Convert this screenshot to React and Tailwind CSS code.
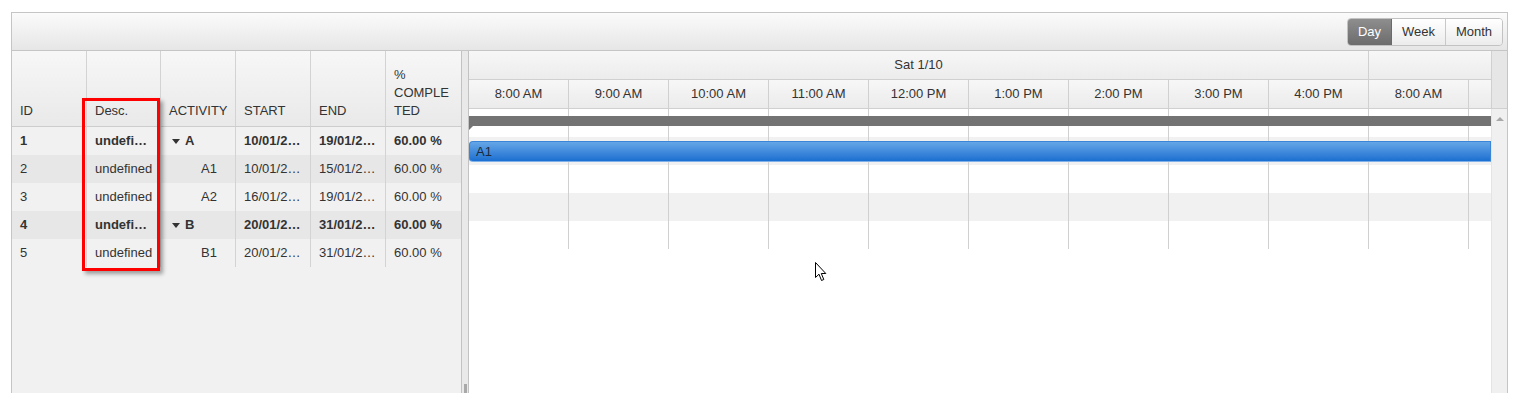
import React from 'react'

const rows = [
  { id: 1, desc: 'undefined', act: 'A', parent: true, start: '10/01/2015', end: '19/01/2015' },
  { id: 2, desc: 'undefined', act: 'A1', start: '10/01/2015', end: '15/01/2015' },
  { id: 3, desc: 'undefined', act: 'A2', start: '16/01/2015', end: '19/01/2015' },
  { id: 4, desc: 'undefined', act: 'B', parent: true, start: '20/01/2015', end: '31/01/2015' },
  { id: 5, desc: 'undefined', act: 'B1', start: '20/01/2015', end: '31/01/2015' },
]

const hours = ['8:00 AM', '9:00 AM', '10:00 AM', '11:00 AM', '12:00 PM', '1:00 PM', '2:00 PM', '3:00 PM', '4:00 PM', '8:00 AM']

function Caret() {
  return (
    <svg width="8" height="5" viewBox="0 0 8 5" className="ml-[3px] mr-[5px]">
      <path d="M0 0 L8 0 L4 5 Z" fill="#333" />
    </svg>
  )
}

function TreeList() {
  return (
    <div className="w-[449px] bg-[#f1f1f1] flex flex-col">
      <div className="h-[76px] flex border-b border-[#cdcdcd] bg-gradient-to-b from-[#f7f7f7] to-[#e9e9e9] leading-[18px]">
        <div className="w-[75px] border-r border-[#d3d3d3] px-2 pb-[6px] flex items-end">ID</div>
        <div className="w-[74px] border-r border-[#d3d3d3] px-2 pb-[6px] flex items-end">Desc.</div>
        <div className="w-[75px] border-r border-[#d3d3d3] px-2 pb-[6px] flex items-end">ACTIVITY</div>
        <div className="w-[75px] border-r border-[#d3d3d3] px-2 pb-[6px] flex items-end">START</div>
        <div className="w-[75px] border-r border-[#d3d3d3] px-2 pb-[6px] flex items-end">END</div>
        <div className="w-[75px] px-2 pb-[6px] flex items-end">
          <span>
            %<br />COMPLE<br />TED
          </span>
        </div>
      </div>
      {rows.map((r, i) => (
        <div
          key={r.id}
          className={`h-[28px] flex items-center ${i % 2 ? 'bg-[#e7e7e7]' : ''} ${r.parent ? 'font-bold' : ''}`}
        >
          <div className="w-[75px] h-full border-r border-[#d3d3d3] px-2 flex items-center">{r.id}</div>
          <div className="w-[74px] h-full border-r border-[#d3d3d3] pl-2 pr-[6px] flex items-center">
            <span className="truncate">{r.desc}</span>
          </div>
          <div className="w-[75px] h-full border-r border-[#d3d3d3] px-2 flex items-center">
            {r.parent ? <Caret /> : <span className="w-[32px] shrink-0" />}
            <span>{r.act}</span>
          </div>
          <div className="w-[75px] h-full border-r border-[#d3d3d3] px-2 flex items-center">
            <span className="truncate">{r.start}</span>
          </div>
          <div className="w-[75px] h-full border-r border-[#d3d3d3] px-2 flex items-center">
            <span className="truncate">{r.end}</span>
          </div>
          <div className="w-[75px] h-full px-2 flex items-center">60.00 %</div>
        </div>
      ))}
      <div className="flex-1" />
    </div>
  )
}

function GridCells() {
  return (
    <>
      {hours.map((h, i) => (
        <div key={i} className="w-[100px] h-full border-r border-[#d0d0d0] shrink-0" />
      ))}
      <div className="flex-1" />
    </>
  )
}

function Timeline() {
  return (
    <div className="flex-1 flex flex-col">
      <div className="flex h-[58px]">
        <div className="w-[1022px] flex flex-col">
          <div className="h-[29px] flex border-b border-[#d0d0d0] bg-gradient-to-b from-[#f7f7f7] to-[#ececec]">
            <div className="w-[900px] border-r border-[#d0d0d0] flex items-center justify-center">Sat 1/10</div>
            <div className="flex-1" />
          </div>
          <div className="h-[29px] flex border-b border-[#d0d0d0] bg-gradient-to-b from-[#f7f7f7] to-[#ebebeb]">
            {hours.map((h, i) => (
              <div key={i} className="w-[100px] shrink-0 border-r border-[#d0d0d0] flex items-center justify-center">
                {h}
              </div>
            ))}
            <div className="flex-1" />
          </div>
        </div>
        <div className="w-[16px] border-l border-b border-[#d0d0d0] bg-[#e6e6e6]" />
      </div>
      <div className="flex flex-1">
        <div className="w-[1022px] bg-white">
          <div className="relative h-[28px] flex">
            <GridCells />
            <div className="absolute left-0 right-0 top-[7px] h-[10px] bg-[#737373]" />
            <div className="absolute left-0 top-[17px] w-0 h-0 border-t-[4px] border-t-[#737373] border-r-[4px] border-r-transparent" />
          </div>
          <div className="relative h-[28px] flex bg-[#f1f1f1]">
            <GridCells />
            <div className="absolute left-0 right-0 top-[4px] h-[21px] rounded-l-[4px] border border-[#3a85d6] border-b-[#7fb1e8] bg-gradient-to-b from-[#64a6e6] to-[#1a6fd1] flex items-center pl-[6px] text-[#1c2a3a]">
              A1
            </div>
          </div>
          <div className="h-[28px] flex">
            <GridCells />
          </div>
          <div className="h-[28px] flex bg-[#f1f1f1]">
            <GridCells />
          </div>
          <div className="h-[28px] flex">
            <GridCells />
          </div>
        </div>
        <div className="w-[16px] border-l border-[#e4e4e4] bg-[#f0f0f0] flex justify-center pt-[8px]">
          <svg width="8" height="4" viewBox="0 0 8 4">
            <path d="M0 4 L4 0 L8 4 Z" fill="#a8a8a8" />
          </svg>
        </div>
      </div>
    </div>
  )
}

export default function App() {
  return (
    <div className="relative h-[393px] w-[1528px] overflow-hidden bg-white font-['Liberation_Sans',Arial,sans-serif] text-[13px] text-[#333]">
      <div className="ml-[11px] mt-[12px] w-[1497px] h-[420px] border border-[#c5c5c5] flex flex-col">
        <div className="h-[38px] shrink-0 border-b border-[#c5c5c5] bg-gradient-to-b from-[#fbfbfb] to-[#e6e6e6] flex items-center justify-end pr-[4px]">
          <div className="flex h-[28px] rounded-[4px] overflow-hidden border border-[#c2c2c2]">
            <div className="w-[44px] flex items-center justify-center text-white bg-gradient-to-b from-[#8e8e8e] to-[#6c6c6c] border-r border-[#6a6a6a]">
              Day
            </div>
            <div className="w-[54px] flex items-center justify-center bg-gradient-to-b from-[#ffffff] to-[#ececec] border-r border-[#c8c8c8]">
              Week
            </div>
            <div className="w-[56px] flex items-center justify-center bg-gradient-to-b from-[#ffffff] to-[#ececec]">
              Month
            </div>
          </div>
        </div>
        <div className="flex flex-1 min-h-0">
          <TreeList />
          <div className="w-[8px] border-x border-[#c2c2c2] bg-[#e9e9e9] flex flex-col justify-end items-center">
            <div className="w-[3px] h-[21px] mb-[26px] bg-[#a9a9a9]" />
          </div>
          <Timeline />
        </div>
      </div>

      <div className="absolute left-[82px] top-[98px] w-[78px] h-[173px] border-[3px] border-[#ff0000] shadow-[3px_3px_4px_rgba(0,0,0,0.35)]" />

      <svg className="absolute left-[815px] top-[262px]" width="13" height="20" viewBox="0 0 13 20">
        <path d="M0.5 0.5 L0.5 15.5 L4 12.2 L6.5 18.5 L8.8 17.5 L6.3 11.5 L10.8 11.5 Z" fill="#fff" stroke="#000" strokeWidth="1" />
      </svg>
    </div>
  )
}
